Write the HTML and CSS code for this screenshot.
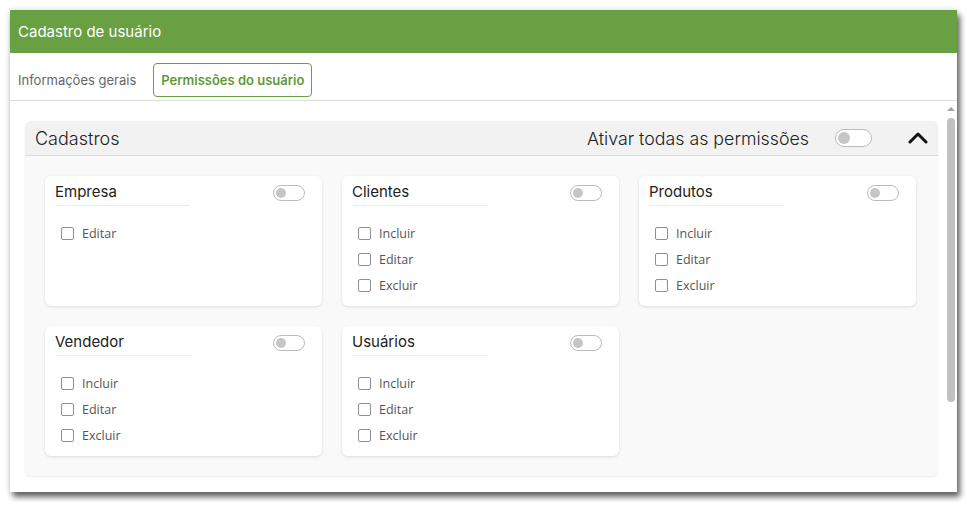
FILE: index.html
```html
<!DOCTYPE html>
<html lang="pt-BR">

<head>
    <meta charset="UTF-8">
    <title>Cadastro de usuário</title>
    <link rel="stylesheet" href="styles.css">
</head>

<body>

    <div class="dialog">
        <!-- Header -->
        <div class="dialog-header">Cadastro de usuário</div>

        <!-- Tabs -->
        <div class="tabs">
            <button class="tab">Informações gerais</button>
            <button class="tab active">Permissões do usuário</button>
        </div>

        <div class="dialog-body">
            <div class="scroll-area">
                <div class="panel">
                    <div class="panel-header">
                        <span class="panel-title">Cadastros</span>
                        <span class="panel-all">Ativar todas as permissões</span>
                        <span class="switch big"><span class="knob"></span></span>
                        <svg class="chevron" width="20" height="12" viewBox="0 0 20 12">
                            <path d="M2 10 L10 2 L18 10" fill="none" stroke="#111" stroke-width="3" stroke-linecap="round" stroke-linejoin="round" />
                        </svg>
                    </div>

                    <div class="panel-body">
                        <div class="card">
                            <div class="card-head">
                                <div class="card-title">Empresa</div>
                                <span class="switch"><span class="knob"></span></span>
                            </div>
                            <label class="check"><span class="box"></span>Editar</label>
                        </div>

                        <div class="card">
                            <div class="card-head">
                                <div class="card-title">Clientes</div>
                                <span class="switch"><span class="knob"></span></span>
                            </div>
                            <label class="check"><span class="box"></span>Incluir</label>
                            <label class="check"><span class="box"></span>Editar</label>
                            <label class="check"><span class="box"></span>Excluir</label>
                        </div>

                        <div class="card">
                            <div class="card-head">
                                <div class="card-title">Produtos</div>
                                <span class="switch"><span class="knob"></span></span>
                            </div>
                            <label class="check"><span class="box"></span>Incluir</label>
                            <label class="check"><span class="box"></span>Editar</label>
                            <label class="check"><span class="box"></span>Excluir</label>
                        </div>

                        <div class="card">
                            <div class="card-head">
                                <div class="card-title">Vendedor</div>
                                <span class="switch"><span class="knob"></span></span>
                            </div>
                            <label class="check"><span class="box"></span>Incluir</label>
                            <label class="check"><span class="box"></span>Editar</label>
                            <label class="check"><span class="box"></span>Excluir</label>
                        </div>

                        <div class="card">
                            <div class="card-head">
                                <div class="card-title">Usuários</div>
                                <span class="switch"><span class="knob"></span></span>
                            </div>
                            <label class="check"><span class="box"></span>Incluir</label>
                            <label class="check"><span class="box"></span>Editar</label>
                            <label class="check"><span class="box"></span>Excluir</label>
                        </div>
                    </div>
                </div>
            </div>

            <!-- scrollbar -->
            <div class="scrollbar">
                <span class="arrow"></span>
                <span class="thumb"></span>
            </div>
        </div>
    </div>

</body>

</html>
```

FILE: styles.css
```css
body {
    margin: 0;
    padding: 10px;
    background: #fff;
    font-family: 'Inter', sans-serif;
}

.dialog {
    width: 947px;
    height: 482px;
    background: #fff;
    display: flex;
    flex-direction: column;
    box-shadow: 3px 5px 6px rgba(0, 0, 0, 0.6), 0 0 6px rgba(0, 0, 0, 0.15);
}

.dialog-header {
    height: 43px;
    background: #68a042;
    color: #fff;
    font-size: 15px;
    display: flex;
    align-items: center;
    padding-left: 8px;
}

.tabs {
    display: flex;
    align-items: center;
    gap: 9px;
    height: 47px;
    border-bottom: 1px solid #dcdcdc;
}

.tab {
    font-family: 'Inter', sans-serif;
    font-size: 13px;
    color: #666;
    background: none;
    border: 1px solid transparent;
    border-radius: 4px;
    height: 34px;
    padding: 0 7px;
    margin-top: 6px;
}

.tab.active {
    color: #5f9a38;
    font-weight: 600;
    border-color: #68a042;
}

.dialog-body {
    flex: 1;
    display: flex;
    min-height: 0;
}

.scroll-area {
    flex: 1;
    padding: 20px 7px 0 15px;
}

.scrollbar {
    width: 12px;
    display: flex;
    flex-direction: column;
    align-items: center;
    padding-top: 6px;
}

.arrow {
    width: 0;
    height: 0;
    border-left: 4px solid transparent;
    border-right: 4px solid transparent;
    border-bottom: 4px solid #a3a3a3;
}

.thumb {
    width: 8px;
    height: 284px;
    margin-top: 7px;
    background: #c1c1c1;
    border-radius: 4px;
}

.panel {
    background: #f9f9f9;
    border-radius: 6px;
    box-shadow: 0 1px 2px rgba(0, 0, 0, 0.08);
}

.panel-header {
    height: 34px;
    display: flex;
    align-items: center;
    padding: 0 10px;
    background: #f2f2f2;
    border-bottom: 1px solid #dadada;
    border-radius: 6px 6px 0 0;
}

.panel-title {
    font-size: 18px;
    font-weight: 300;
    color: #222;
    flex: 1;
}

.panel-all {
    font-size: 17.8px;
    font-weight: 300;
    color: #222;
    margin-right: 26px;
}

.chevron {
    margin-left: 36px;
}

.switch {
    display: inline-flex;
    align-items: center;
    box-sizing: border-box;
    width: 32px;
    height: 16px;
    border: 1px solid #bbb;
    border-radius: 8px;
    background: #fff;
    padding-left: 2px;
}

.switch .knob {
    width: 10px;
    height: 10px;
    border-radius: 50%;
    background: #c6c6c6;
}

.switch.big {
    width: 37px;
    height: 18px;
    border-radius: 9px;
}

.switch.big .knob {
    width: 12px;
    height: 12px;
}

.panel-body {
    display: grid;
    grid-template-columns: repeat(3, 277px);
    gap: 20px;
    padding: 20px;
}

.card {
    background: #fff;
    border-radius: 6px;
    box-shadow: 0 1px 3px rgba(0, 0, 0, 0.12);
    padding: 4px 17px 8px 10px;
    display: flex;
    flex-direction: column;
}

.card-head {
    display: flex;
    justify-content: space-between;
    align-items: flex-start;
    margin-bottom: 14px;
}

.card-title {
    width: 54%;
    font-size: 15px;
    color: #222;
    padding: 2px 0 4px;
    border-bottom: 1px solid #eee;
}

.card-head .switch {
    margin-top: 5px;
}

.check {
    display: flex;
    align-items: center;
    gap: 8px;
    height: 26px;
    padding-left: 6px;
    font-family: 'Open Sans', sans-serif;
    font-size: 12.5px;
    color: #555;
}

.box {
    box-sizing: border-box;
    width: 13px;
    height: 13px;
    border: 1px solid #8f8f8f;
    border-radius: 2px;
    background: #fff;
}
```
